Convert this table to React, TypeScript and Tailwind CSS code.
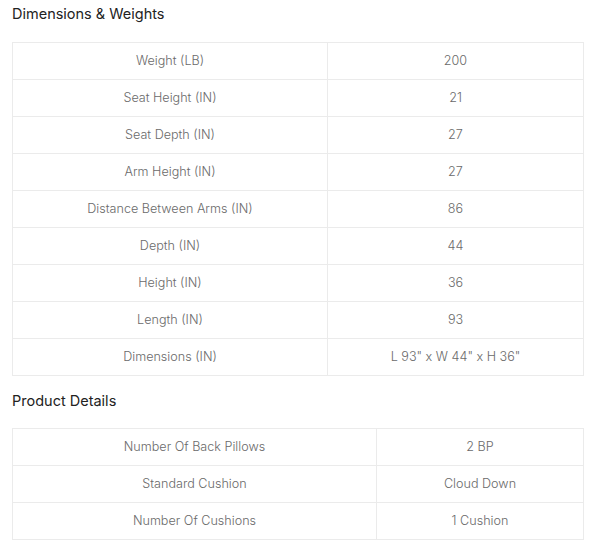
import React from "react";

interface SpecRow {
  label: string;
  value: string;
}

const dimensions: SpecRow[] = [
  { label: "Weight (LB)", value: "200" },
  { label: "Seat Height (IN)", value: "21" },
  { label: "Seat Depth (IN)", value: "27" },
  { label: "Arm Height (IN)", value: "27" },
  { label: "Distance Between Arms (IN)", value: "86" },
  { label: "Depth (IN)", value: "44" },
  { label: "Height (IN)", value: "36" },
  { label: "Length (IN)", value: "93" },
  { label: "Dimensions (IN)", value: 'L 93" x W 44" x H 36"' },
];

const details: SpecRow[] = [
  { label: "Number Of Back Pillows", value: "2 BP" },
  { label: "Standard Cushion", value: "Cloud Down" },
  { label: "Number Of Cushions", value: "1 Cushion" },
];

const SpecTable = ({ rows, labelWidth }: { rows: SpecRow[]; labelWidth: string }) => {
  return (
    <table className="w-[572px] border-collapse text-[12.6px] font-light text-[#6a6a6a]">
      <tbody>
        {rows.map((row) => (
          <tr key={row.label} className="h-[37px]">
            <td
              className={`${labelWidth} border border-[#ebebeb] pt-px text-center align-middle`}
            >
              {row.label}
            </td>
            <td className="border border-[#ebebeb] pt-px text-center align-middle">
              {row.value}
            </td>
          </tr>
        ))}
      </tbody>
    </table>
  );
};

const App = () => {
  return (
    <div className="min-h-[556px] bg-white pl-3 pt-1 font-['Inter',sans-serif]">
      <h3 className="mb-[18px] text-[14.5px] leading-5 text-[#222]">
        Dimensions &amp; Weights
      </h3>
      <SpecTable rows={dimensions} labelWidth="w-[315px]" />

      <h3 className="mb-[17px] mt-[15px] text-[14.5px] leading-5 text-[#222]">
        Product Details
      </h3>
      <SpecTable rows={details} labelWidth="w-[364px]" />
    </div>
  );
};

export default App;
